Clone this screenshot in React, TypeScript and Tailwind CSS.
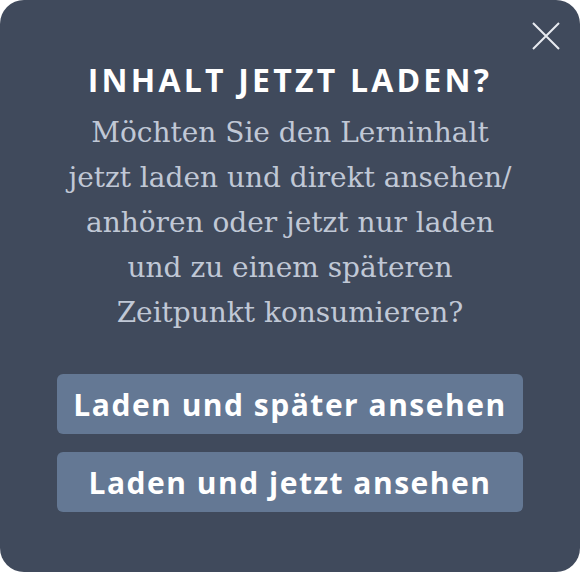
import React from "react";

const App = () => {
  const buttons = ["Laden und später ansehen", "Laden und jetzt ansehen"];

  return (
    <div className="w-[580px] h-[572px] bg-white">
      <div className="relative w-full h-full rounded-[24px] bg-[#404a5c] flex flex-col items-center pt-[62px]">
        {/* close */}
        <button className="absolute top-[22px] right-[20px] w-[28px] h-[28px]" aria-label="Schließen">
          <svg viewBox="0 0 28 28" className="w-full h-full" fill="none" stroke="#e8ebf0" strokeWidth="2">
            <path d="M1 1 L27 27 M27 1 L1 27" />
          </svg>
        </button>

        <h2 className="font-['Open_Sans',sans-serif] font-bold text-[32px] leading-[36px] tracking-[3.2px] text-white uppercase">
          Inhalt jetzt laden?
        </h2>

        <p className="mt-[12px] font-['DejaVu_Serif',serif] text-[28px] leading-[45px] text-[#c0c8d6] text-center">
          Möchten Sie den Lerninhalt
          <br />
          jetzt laden und direkt ansehen/
          <br />
          anhören oder jetzt nur laden
          <br />
          und zu einem späteren
          <br />
          Zeitpunkt konsumieren?
        </p>

        <div className="mt-[39px] flex flex-col gap-[18px] w-[466px]">
          {buttons.map((label) => (
            <button
              key={label}
              className="h-[60px] rounded-[6px] bg-[#647894] text-white font-['Open_Sans',sans-serif] font-bold text-[30px] tracking-[1.5px]"
            >
              {label}
            </button>
          ))}
        </div>
      </div>
    </div>
  );
};

export default App;
